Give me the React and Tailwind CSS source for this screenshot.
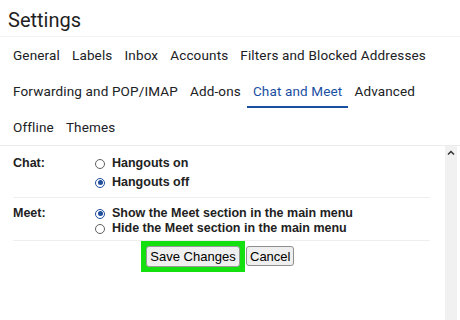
import React from "react";

function Radio({ checked }) {
  return checked ? (
    <span className="flex h-[10px] w-[10px] items-center justify-center rounded-full border border-[#1f4e9c] bg-white">
      <span className="h-[5px] w-[5px] rounded-full bg-[#1f4e9c]" />
    </span>
  ) : (
    <span className="h-[10px] w-[10px] rounded-full border border-[#5f5f5f] bg-white" />
  );
}

function Tab({ children, active }) {
  return (
    <div className="relative flex h-full items-center px-[6px]">
      <span className={active ? "text-[#1a4fa3]" : "text-[#202124]"}>{children}</span>
      {active && <span className="absolute bottom-[1px] left-0 right-0 h-[2px] bg-[#1a4fa3]" />}
    </div>
  );
}

export default function App() {
  return (
    <div className="h-[320px] w-[460px] overflow-hidden bg-white">
      <div className="flex h-[37px] items-center border-b border-[#f2f2f2] pl-[8px] pt-[3px] font-['Roboto',sans-serif] text-[20px] text-[#1f1f1f]">
        Settings
      </div>
      <div className="flex flex-col border-b border-[#ececec] pl-[7px] font-['Roboto',sans-serif] text-[13.5px] tracking-[0.15px]">
        <div className="flex h-[36px] items-center">
          <Tab>General</Tab>
          <Tab>Labels</Tab>
          <Tab>Inbox</Tab>
          <Tab>Accounts</Tab>
          <Tab>Filters and Blocked Addresses</Tab>
        </div>
        <div className="flex h-[36px] items-center">
          <Tab>Forwarding and POP/IMAP</Tab>
          <Tab>Add-ons</Tab>
          <Tab active>Chat and Meet</Tab>
          <Tab>Advanced</Tab>
        </div>
        <div className="flex h-[36px] items-center">
          <Tab>Offline</Tab>
          <Tab>Themes</Tab>
        </div>
      </div>
      <div className="flex h-[174px]">
        <div className="flex-1 pl-[13px] pr-[15px] font-['Liberation_Sans',Arial,sans-serif] text-[12.5px] font-bold text-[#222]">
          <div className="flex border-b border-[#eeeeee] pt-[8px] pb-[5px]">
            <div className="w-[82px] leading-[19px]">Chat:</div>
            <div className="flex flex-col">
              <label className="flex h-[19px] items-center gap-[7px]"><Radio />Hangouts on</label>
              <label className="flex h-[19px] items-center gap-[7px]"><Radio checked />Hangouts off</label>
            </div>
          </div>
          <div className="flex border-b border-[#eeeeee] pt-[8px] pb-[4px]">
            <div className="w-[82px] leading-[15px]">Meet:</div>
            <div className="flex flex-col">
              <label className="flex h-[15px] items-center gap-[7px]"><Radio checked />Show the Meet section in the main menu</label>
              <label className="flex h-[15px] items-center gap-[7px]"><Radio />Hide the Meet section in the main menu</label>
            </div>
          </div>
          <div className="flex items-start pl-[128px] font-normal">
            <div className="flex h-[31px] w-[104px] items-center justify-center bg-[#14e010]">
              <button className="h-[21px] rounded-[3px] border border-[#9a9a9a] bg-[#efefef] px-[3px] text-[13px] text-black">Save Changes</button>
            </div>
            <button className="ml-[1px] mt-[5px] h-[20px] rounded-[3px] border border-[#8f8f8f] bg-[#efefef] px-[3px] text-[13px] text-black">Cancel</button>
          </div>
        </div>
        <div className="mr-[3px] flex w-[12px] flex-col items-center bg-[#f1f1f1] pt-[4px]">
          <svg width="8" height="5" viewBox="0 0 8 5"><path d="M1 4.5 L4 1.5 L7 4.5" fill="none" stroke="#333" strokeWidth="1.5" /></svg>
        </div>
      </div>
    </div>
  );
}
